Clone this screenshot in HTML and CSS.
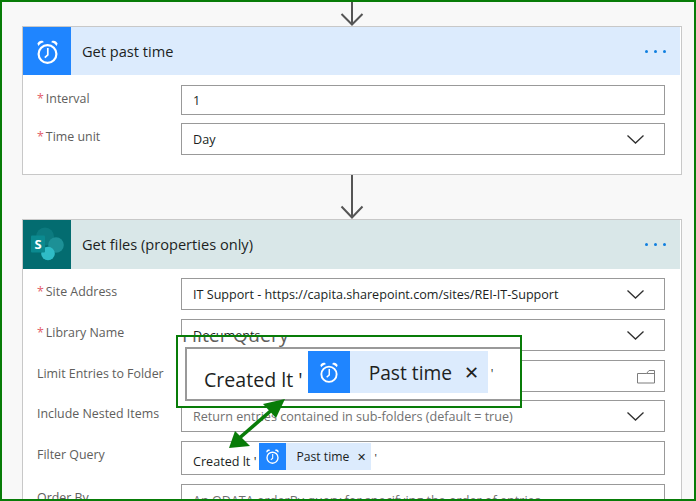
FILE: index.html
```html
<!DOCTYPE html>
<html lang="en">
<head>
<meta charset="utf-8">
<title>Flow</title>
<link rel="stylesheet" href="styles.css">
</head>
<body>
<svg class="defs" width="0" height="0" aria-hidden="true">
  <symbol id="alarm" viewBox="0 0 21 24">
    <circle cx="10.5" cy="14" r="8.9" fill="none" stroke="#fff" stroke-width="2.2"/>
    <path d="M10.8 8V14.8L7.8 17.6" fill="none" stroke="#fff" stroke-width="1.7"/>
    <path d="M0.4 3.6C1.4 1.4 3.4 0.2 6 1L6.8 2.3C4.4 2.8 2.6 4.2 1.4 6Z" fill="#fff"/>
    <path d="M20.6 3.6C19.6 1.4 17.6 0.2 15 1L14.2 2.3C16.6 2.8 18.4 4.2 19.6 6Z" fill="#fff"/>
  </symbol>
  <symbol id="chev" viewBox="0 0 17 9">
    <path d="M0.5 0.5L8.5 8L16.5 0.5" fill="none" stroke="#2f2f2f" stroke-width="1.3"/>
  </symbol>
</svg>
<div class="frame">
  <svg class="arrow arrow-top" width="24" height="24" viewBox="0 0 24 24"><path d="M12 -2V22.5M1.5 12L12 22.5L22.5 12" fill="none" stroke="#555" stroke-width="2"/></svg>

  <section class="card">
    <header class="head head-blue">
      <div class="tile tile-blue"><svg class="ic-main" width="21" height="24"><use href="#alarm"/></svg></div>
      <h2 class="title">Get past time</h2>
      <div class="dots"><i></i><i></i><i></i></div>
    </header>
    <div class="body body-a">
      <div class="row"><div class="label"><b>*</b>Interval</div><div class="field h30"><span class="val">1</span></div></div>
      <div class="row"><div class="label"><b>*</b>Time unit</div><div class="field"><span class="val">Day</span><svg class="chev" width="17" height="9"><use href="#chev"/></svg></div></div>
    </div>
  </section>

  <svg class="arrow arrow-mid" width="24" height="44" viewBox="0 0 24 44"><path d="M12 0V42.5M1.5 31.5L12 42.5L22.5 31.5" fill="none" stroke="#555" stroke-width="2"/></svg>

  <section class="card">
    <header class="head head-teal">
      <div class="tile tile-teal">
        <svg width="48" height="49" viewBox="0 0 48 49">
          <circle cx="22" cy="16.5" r="9" fill="#0c7a7f"/>
          <circle cx="33" cy="25" r="7.8" fill="#1d9096"/>
          <circle cx="25" cy="33.5" r="6.8" fill="#2fbcc6"/>
          <rect x="8" y="15.5" width="14" height="17" rx="1" fill="#0b8a90"/>
          <text x="15" y="29" class="s-letter">S</text>
        </svg>
      </div>
      <h2 class="title title-teal">Get files (properties only)</h2>
      <div class="dots"><i></i><i></i><i></i></div>
    </header>
    <div class="body body-b">
      <div class="row gap9"><div class="label"><b>*</b>Site Address</div><div class="field"><span class="val">IT Support - https://capita.sharepoint.com/sites/REI-IT-Support</span><svg class="chev" width="17" height="9"><use href="#chev"/></svg></div></div>
      <div class="row gap9"><div class="label"><b>*</b>Library Name</div><div class="field"><span class="val">Documents</span><svg class="chev" width="17" height="9"><use href="#chev"/></svg></div></div>
      <div class="row"><div class="label">Limit Entries to Folder</div><div class="field"><svg class="folder" width="18" height="15" viewBox="0 0 18 15"><path d="M0.5 4.5H9.5L12 1.5H17.5V14H0.5ZM9.5 4.5H17.5" fill="#fff" stroke="#7d7d7d"/></svg></div></div>
      <div class="row gap9"><div class="label">Include Nested Items</div><div class="field"><span class="val ph">Return entries contained in sub-folders (default = true)</span><svg class="chev" width="17" height="9"><use href="#chev"/></svg></div></div>
      <div class="row gap9"><div class="label">Filter Query</div>
        <div class="field h34 query">
          <span class="val q-text">Created lt '</span>
          <span class="token">
            <span class="tok-ic"><svg width="13" height="15"><use href="#alarm"/></svg></span>
            <span class="tok-text">Past time</span>
            <span class="tok-x">✕</span>
          </span>
          <span class="val q-end">'</span>
        </div>
      </div>
      <div class="row"><div class="label">Order By</div><div class="field"><span class="val ph">An ODATA orderBy query for specifying the order of entries.</span></div></div>
    </div>
  </section>

  <div class="zoom">
    <div class="zoom-label">Filter Query</div>
    <div class="zoom-field">
      <span class="zoom-text">Created lt '</span>
      <span class="zoom-token">
        <span class="ztok-ic"><svg width="18" height="21"><use href="#alarm"/></svg></span>
        <span class="ztok-text">Past time</span>
        <span class="ztok-x">✕</span>
      </span>
      <span class="zoom-end">'</span>
    </div>
  </div>

  <svg class="link" width="70" height="60" viewBox="0 0 70 60">
    <path d="M16 45L54 12" stroke="#087c08" stroke-width="3.6"/>
    <path d="M65 3L43 8L56 22Z" fill="#087c08"/>
    <path d="M9 52L15 35L30 50Z" fill="#087c08"/>
  </svg>
</div>
</body>
</html>
```
FILE: styles.css
```css
* { box-sizing: border-box; }
html, body { margin: 0; padding: 0; }
body { width: 696px; height: 501px; overflow: hidden; font-family: "Open Sans", "Noto Sans", sans-serif; }
.defs { display: block; height: 0; }

.frame {
  position: relative;
  width: 696px;
  height: 501px;
  overflow: hidden;
  background: #f8f8f8;
  border: 2px solid #087c08;
  padding: 0 12px 0 20px;
  display: flex;
  flex-direction: column;
}
.arrow { display: block; flex: none; margin-left: 318px; }

.card { flex: none; width: 660px; background: #fff; border: 1px solid #c8c8c8; }
.head { display: flex; align-items: center; margin-right: 1px; }
.head-blue { height: 48px; background: #dcebfd; }
.head-teal { height: 49px; background: #d9e7e8; }
.tile { width: 48px; align-self: stretch; display: flex; align-items: center; justify-content: center; }
.tile-blue { background: #1f85ff; }
.tile-teal { background: #036c70; }
.ic-main { margin-top: 2px; }
.s-letter { font: bold 13px "Open Sans", sans-serif; fill: #fff; text-anchor: middle; }
.title { margin: 0 0 0 11px; flex: 1; font-size: 14.6px; font-weight: 400; color: #201f1e; }
.title-teal { margin-bottom: 2px; }
.dots { display: flex; gap: 6px; margin-right: 14px; }
.dots i { display: block; width: 3px; height: 3px; border-radius: 50%; background: #0f7fe0; }

.body { padding: 10px 16px 0 14px; }
.body-a { padding-bottom: 19px; }
.body-b { padding-top: 9px; }
.row { display: flex; margin-bottom: 8px; }
.gap9 { margin-bottom: 9px; }
.row:last-child { margin-bottom: 0; }
.label { width: 144px; flex: none; padding-top: 5px; font-size: 12.4px; line-height: 17px; color: #605e5c; }
.label b { font-weight: 400; color: #e3606b; margin-right: 2px; }
.field {
  flex: 1;
  height: 32px;
  border: 1px solid #999;
  padding: 0 20px 0 11px;
  display: flex;
  align-items: center;
  background: #fff;
}
.h30 { height: 30px; }
.h34 { height: 34px; }
.val { font-size: 12.6px; color: #201f1e; white-space: nowrap; }
.ph { color: #707070; }
.chev { margin-left: auto; flex: none; }
.folder { margin-left: auto; margin-right: -11px; flex: none; }

.query { align-items: flex-start; padding-top: 1px; }
.q-text { margin-top: 10px; margin-right: 3px; }
.token { display: flex; align-items: center; height: 27px; background: #dcebfd; width: 112px; }
.tok-ic { width: 27px; height: 27px; background: #1f85ff; display: flex; align-items: center; justify-content: center; }
.tok-text { margin-left: 10px; font-size: 12.2px; color: #201f1e; }
.tok-x { margin-left: 8px; font-size: 11px; color: #201f1e; }
.q-end { margin-left: 3px; margin-top: 7px; font-size: 11px; }

.zoom {
  position: absolute;
  left: 174px;
  top: 333px;
  width: 346px;
  height: 73px;
  border: 2px solid #087c08;
  background: #fff;
  overflow: hidden;
  padding-left: 7px;
}
.zoom-label { height: 14px; margin: -2px 0 -2px -3px; line-height: 0; font-size: 19.5px; color: #605e5c; white-space: nowrap; }
.zoom-field {
  height: 54px;
  border: 2px solid #999;
  border-right: 0;
  display: flex;
  align-items: flex-start;
  padding: 2px 0 0 17px;
}
.zoom-text { font-size: 19.6px; color: #201f1e; margin-top: 15px; white-space: nowrap; margin-right: 5px; }
.zoom-token { display: flex; align-items: center; flex: none; width: 180px; height: 42px; background: #dcebfd; }
.ztok-ic { width: 42px; height: 42px; background: #1f85ff; display: flex; align-items: center; justify-content: center; }
.ztok-text { margin-left: 19px; font-size: 19.2px; color: #201f1e; white-space: nowrap; }
.ztok-x { margin-left: 12px; font-size: 18px; color: #201f1e; }
.zoom-end { margin-left: 3px; margin-top: 14px; font-size: 12px; color: #201f1e; }

.link { position: absolute; left: 218px; top: 394px; }
```
